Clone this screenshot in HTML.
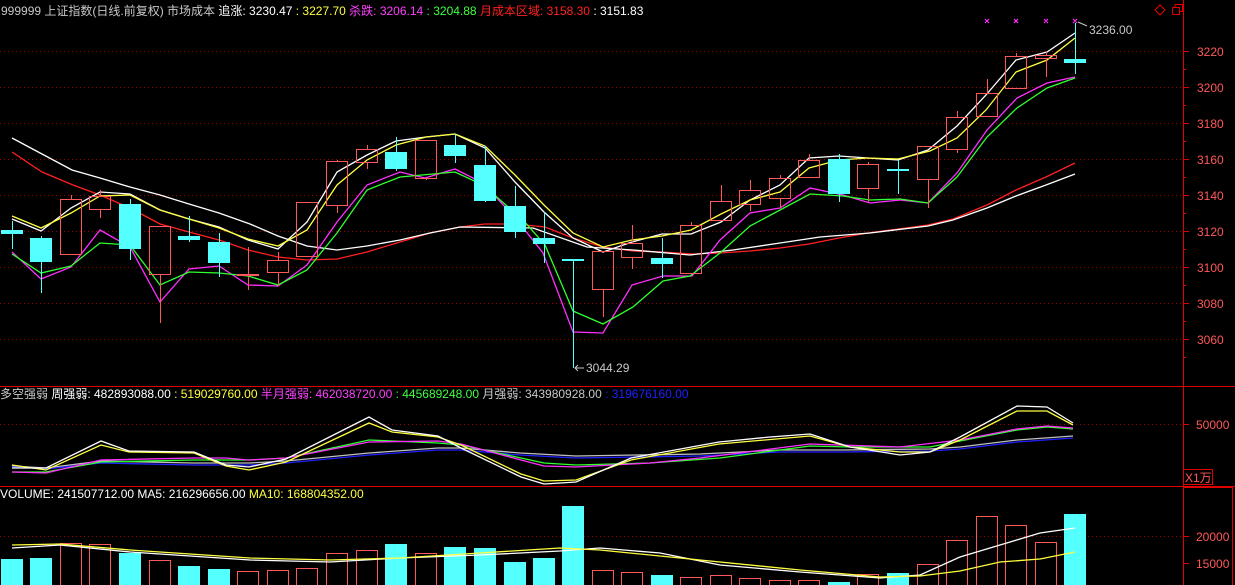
<!DOCTYPE html>
<html><head><meta charset="utf-8"><style>
html,body{margin:0;padding:0;background:#000;width:1235px;height:585px;overflow:hidden}
svg{display:block}
text{font-family:"Liberation Sans","Noto Sans CJK SC",sans-serif;font-size:12px}
</style></head><body>
<svg width="1235" height="585" viewBox="0 0 1235 585" xmlns="http://www.w3.org/2000/svg" shape-rendering="crispEdges">
<g stroke="#a00000" stroke-dasharray="1,3" stroke-width="1">
<line x1="0" y1="51.5" x2="1183" y2="51.5"/><line x1="0" y1="87.5" x2="1183" y2="87.5"/>
<line x1="0" y1="123.5" x2="1183" y2="123.5"/><line x1="0" y1="159.5" x2="1183" y2="159.5"/>
<line x1="0" y1="195.5" x2="1183" y2="195.5"/><line x1="0" y1="231.5" x2="1183" y2="231.5"/>
<line x1="0" y1="267.5" x2="1183" y2="267.5"/><line x1="0" y1="303.5" x2="1183" y2="303.5"/>
<line x1="0" y1="339.5" x2="1183" y2="339.5"/>
<line x1="0" y1="424.5" x2="1183" y2="424.5"/>
<line x1="0" y1="536.5" x2="1183" y2="536.5"/>
</g>
<g stroke="#e00000" stroke-width="1">
<line x1="1183.5" y1="0" x2="1183.5" y2="585"/>
<line x1="0" y1="386.5" x2="1235" y2="386.5"/>
<line x1="0" y1="486.5" x2="1235" y2="486.5"/>
<rect x="1183.5" y="487.5" width="49" height="100" fill="none"/>
<rect x="1183.5" y="469.5" width="29" height="15" fill="none"/>
<line x1="1183" y1="51.5" x2="1189" y2="51.5"/><line x1="1183" y1="87.5" x2="1189" y2="87.5"/>
<line x1="1183" y1="123.5" x2="1189" y2="123.5"/><line x1="1183" y1="159.5" x2="1189" y2="159.5"/>
<line x1="1183" y1="195.5" x2="1189" y2="195.5"/><line x1="1183" y1="231.5" x2="1189" y2="231.5"/>
<line x1="1183" y1="267.5" x2="1189" y2="267.5"/><line x1="1183" y1="303.5" x2="1189" y2="303.5"/>
<line x1="1183" y1="339.5" x2="1189" y2="339.5"/>
<line x1="1183" y1="69.5" x2="1186" y2="69.5"/><line x1="1183" y1="105.5" x2="1186" y2="105.5"/>
<line x1="1183" y1="141.5" x2="1186" y2="141.5"/><line x1="1183" y1="177.5" x2="1186" y2="177.5"/>
<line x1="1183" y1="213.5" x2="1186" y2="213.5"/><line x1="1183" y1="249.5" x2="1186" y2="249.5"/>
<line x1="1183" y1="285.5" x2="1186" y2="285.5"/><line x1="1183" y1="321.5" x2="1186" y2="321.5"/>
<line x1="1183" y1="357.5" x2="1186" y2="357.5"/>
<line x1="1183" y1="424.5" x2="1189" y2="424.5"/><line x1="1183" y1="536.5" x2="1189" y2="536.5"/><line x1="1183" y1="563.5" x2="1189" y2="563.5"/>
<path d="M1160 5 L1165 10 L1160 15 L1155 10 Z" fill="none"/>
<rect x="1172.5" y="7.5" width="7" height="7" fill="none"/>
<path d="M1175 7.5 V4.5 H1182.5 V11.5 H1179.5" fill="none"/>
</g>
<g fill="#ff5858">
<text x="1197" y="56">3220</text><text x="1197" y="92">3200</text><text x="1197" y="128">3180</text>
<text x="1197" y="164">3160</text><text x="1197" y="200">3140</text><text x="1197" y="236">3120</text>
<text x="1197" y="272">3100</text><text x="1197" y="308">3080</text><text x="1197" y="344">3060</text>
<text x="1196" y="429">50000</text><text x="1196" y="541">20000</text><text x="1196" y="568">15000</text>
<text x="1185" y="482" font-size="13">X1万</text>
</g>

<!-- header -->
<text x="1" y="15" fill="#c8c8c8" xml:space="preserve">999999 上证指数(日线.前复权) 市场成本 <tspan fill="#fff">追涨: 3230.47 </tspan><tspan fill="#ffff40">: 3227.70 </tspan><tspan fill="#ff40ff">杀跌: 3206.14 </tspan><tspan fill="#40ff40">: 3204.88 </tspan><tspan fill="#ff2020">月成本区域: 3158.30 </tspan><tspan fill="#fff">: 3151.83</tspan></text>
<text x="0" y="398" fill="#c8c8c8" xml:space="preserve">多空强弱 <tspan fill="#fff">周强弱: 482893088.00 </tspan><tspan fill="#ffff40">: 519029760.00 </tspan><tspan fill="#ff40ff">半月强弱: 462038720.00 </tspan><tspan fill="#40ff40">: 445689248.00 </tspan><tspan fill="#c8c8c8">月强弱: 343980928.00 </tspan><tspan fill="#2020ff">: 319676160.00</tspan></text>
<text x="0" y="498" fill="#fff" xml:space="preserve">VOLUME: 241507712.00 MA5: 216296656.00 <tspan fill="#ffff40">MA10: 168804352.00</tspan></text>

<!-- long MAs -->
<g fill="none" stroke-width="1.3" shape-rendering="auto">
<polyline stroke="#ff2020" points="12,152 42,172 73,185 100,195 130,208 160,224 189,232 219,240 248,250 278,257 307,260 337,259 367,252 400,242 430,233 460,227 485,224 515,224 545,227 573,238 603,247 633,251 663,252 693,254 720,253 750,251 780,248 809,244 839,238 868,233 898,229 928,225 953,219 987,205 1016,190 1046,177 1075,163"/>
<polyline stroke="#ffffff" points="12,138 42,154 72,170 100,178 130,187 160,195 189,204 219,213 250,224 278,236 307,246 337,250 367,246 400,240 430,233 460,227 533,228 587,247 633,250 690,255 733,250 780,243 820,237 870,233 928,226 953,220 987,208 1016,196 1046,185 1075,174"/>
<!-- short MAs -->
<polyline stroke="#ffffff" points="12,219 41,231 71,208 100,192 130,194 160,210 189,219 219,227 248,240 278,249 307,222 337,172 367,155 396,141 426,137 455,134 485,148 515,182 544,212 573,238 603,252 632,242 662,234 691,234 721,222 750,200 780,185 809,158 839,156 868,158 898,160 928,150 957,126 986,95 1016,60 1047,52 1075,33"/>
<polyline stroke="#ffff40" points="12,216 41,228 71,213 100,196 130,195 160,210 189,219 219,228 248,239 278,246 307,230 337,185 367,160 396,145 426,137 455,134 485,146 515,175 544,205 573,233 603,247 632,240 662,236 691,230 721,214 750,200 780,192 809,168 839,160 868,158 898,159 930,151 957,138 986,110 1016,72 1047,60 1075,38"/>
<polyline stroke="#ff30ff" points="12,252 41,279 71,267 100,230 130,247 160,302 189,269 219,266 248,285 278,286 307,265 337,222 367,185 400,172 425,178 455,169 483,183 517,220 543,253 573,332 603,333 632,285 663,276 692,276 720,240 750,213 780,208 810,188 843,195 870,203 900,200 928,203 957,173 987,130 1017,98 1047,83 1075,77"/>
<polyline stroke="#30ff30" points="12,254 41,273 71,266 100,243 130,245 160,285 189,272 219,273 248,276 278,285 307,270 337,233 367,190 400,177 455,172 483,185 523,220 545,245 573,311 603,324 633,307 663,281 690,276 720,253 750,226 780,210 810,194 843,196 870,200 900,199 928,203 957,177 987,137 1017,108 1047,88 1075,78"/>
</g>

<!-- candles -->
<g stroke="#ff5858" fill="none">
<path d="M71.5 195V199M100.5 190V196M100.5 210V218M160.5 226V226M160.5 275V323M248.5 247V290M278.5 252V260M278.5 273V286M307.5 202V202M337.5 160V161M337.5 206V213M367.5 145V149M367.5 163V169M426.5 179V180M603.5 290V317M632.5 225V243M632.5 258V269M691.5 222V225M721.5 185V201M750.5 180V190M750.5 205V211M780.5 175V178M780.5 199V208M809.5 154V160M868.5 162V164M868.5 189V202M928.5 180V208M957.5 111V117M957.5 150V153M987.5 79V93M1016.5 53V56M1046.5 52V55M1046.5 58V77"/>
<rect x="60.5" y="199.5" width="21" height="55"/>
<rect x="89.5" y="196.5" width="21" height="13"/>
<rect x="149.5" y="226.5" width="21" height="48"/>
<rect x="237.5" y="274.5" width="21" height="1"/>
<rect x="267.5" y="260.5" width="21" height="12"/>
<rect x="296.5" y="202.5" width="21" height="54"/>
<rect x="326.5" y="161.5" width="21" height="44"/>
<rect x="356.5" y="149.5" width="21" height="13"/>
<rect x="415.5" y="140.5" width="21" height="38"/>
<rect x="592.5" y="251.5" width="21" height="38"/>
<rect x="621.5" y="243.5" width="21" height="14"/>
<rect x="680.5" y="225.5" width="21" height="48"/>
<rect x="710.5" y="201.5" width="21" height="19"/>
<rect x="739.5" y="190.5" width="21" height="14"/>
<rect x="769.5" y="178.5" width="21" height="20"/>
<rect x="798.5" y="160.5" width="21" height="17"/>
<rect x="857.5" y="164.5" width="21" height="24"/>
<rect x="917.5" y="146.5" width="21" height="33"/>
<rect x="946.5" y="117.5" width="21" height="32"/>
<rect x="976.5" y="93.5" width="21" height="23"/>
<rect x="1005.5" y="56.5" width="21" height="32"/>
<rect x="1035.5" y="55.5" width="21" height="3"/>
</g>
<g stroke="#54ffff" fill="#54ffff">
<path d="M12.5 221V249M41.5 236V293M130.5 199V260M189.5 216V242M219.5 233V277M396.5 137V171M455.5 134V163M485.5 146V202M515.5 186V238M544.5 212V263M573.5 259V368M662.5 238V278M839.5 154V202M898.5 160V194M1075.5 23V74"/>
<rect x="1.5" y="230.5" width="21" height="3"/>
<rect x="30.5" y="238.5" width="21" height="23"/>
<rect x="119.5" y="204.5" width="21" height="44"/>
<rect x="178.5" y="236.5" width="21" height="3"/>
<rect x="208.5" y="242.5" width="21" height="20"/>
<rect x="385.5" y="152.5" width="21" height="16"/>
<rect x="444.5" y="145.5" width="21" height="10"/>
<rect x="474.5" y="165.5" width="21" height="35"/>
<rect x="504.5" y="206.5" width="21" height="25"/>
<rect x="533.5" y="238.5" width="21" height="5"/>
<rect x="562.5" y="259.5" width="21" height="1"/>
<rect x="651.5" y="258.5" width="21" height="5"/>
<rect x="828.5" y="159.5" width="21" height="34"/>
<rect x="887.5" y="169.5" width="21" height="1"/>
<rect x="1064.5" y="59.5" width="21" height="3"/>
</g>
<g stroke="#c8c8c8" fill="none" shape-rendering="auto">
<path d="M575 368H584M578 365L575 368L578 371"/>
<path d="M1078 22L1087 26"/>
</g>
<text x="586" y="372" fill="#c8c8c8">3044.29</text>
<text x="1089" y="34" fill="#c8c8c8">3236.00</text>
<g stroke="#ff30ff" stroke-width="1.2" shape-rendering="auto">
<path d="M985 19l4 4m0-4l-4 4M1014 19l4 4m0-4l-4 4M1044 19l4 4m0-4l-4 4M1073 19l4 4m0-4l-4 4"/>
</g>

<!-- indicator pane -->
<g fill="none" stroke-width="1.3" shape-rendering="auto">
<polyline stroke="#c0c0c0" points="12,466 46,468 101,461 194,463 249,463 286,461 369,453 438,448 461,448 520,453 576,456 700,454 780,450 840,450 930,449 960,447 1017,440 1073,436"/>
<polyline stroke="#2020ff" points="12,467 46,469 101,463 194,465 249,465 286,463 369,455 438,450 461,450 520,455 576,458 700,456 780,452 840,452 930,451 960,449 1017,442 1073,438"/>
<polyline stroke="#30ff30" points="12,472 46,472 101,462 194,460 249,460 286,458 369,440 438,443 461,445 521,458 544,463 576,465 650,463 720,458 810,446 850,447 930,447 960,441 1017,430 1047,427 1073,429"/>
<polyline stroke="#ff30ff" points="12,472 46,473 101,460 194,458 226,458 249,460 286,458 369,442 438,441 461,444 521,460 544,466 576,467 650,463 700,458 810,444 900,447 960,440 1017,429 1047,426 1073,428"/>
<polyline stroke="#ffff40" points="12,465 46,470 101,445 129,452 194,453 226,466 249,470 286,462 369,423 392,432 438,437 461,445 521,474 544,481 576,480 631,460 719,444 810,436 850,447 900,452 930,452 960,440 1017,411 1047,411 1073,425"/>
<polyline stroke="#ffffff" points="12,468 46,468 101,441 129,451 194,452 226,465 249,467 286,459 369,417 392,430 438,436 461,448 521,477 544,484 576,482 631,458 719,442 770,437 810,434 850,447 900,455 930,452 960,437 1017,406 1047,407 1073,423"/>
</g>

<!-- volume pane -->
<g stroke="#54ffff" fill="#54ffff">
<rect x="1.5" y="559.5" width="21" height="30"/><rect x="30.5" y="558.5" width="21" height="30"/>
<rect x="119.5" y="553.5" width="21" height="40"/><rect x="178.5" y="566.5" width="21" height="30"/>
<rect x="208.5" y="569.5" width="21" height="30"/><rect x="385.5" y="544.5" width="21" height="50"/>
<rect x="444.5" y="547.5" width="21" height="50"/><rect x="474.5" y="548.5" width="21" height="50"/>
<rect x="504.5" y="562.5" width="21" height="30"/><rect x="533.5" y="558.5" width="21" height="30"/>
<rect x="562.5" y="506.5" width="21" height="90"/><rect x="651.5" y="575.5" width="21" height="20"/>
<rect x="828.5" y="582.5" width="21" height="20"/><rect x="887.5" y="573.5" width="21" height="20"/>
<rect x="1064.5" y="514.5" width="21" height="80"/>
</g>
<g stroke="#ff5858" fill="none">
<rect x="60.5" y="543.5" width="21" height="60"/><rect x="89.5" y="544.5" width="21" height="60"/>
<rect x="149.5" y="560.5" width="21" height="40"/><rect x="237.5" y="571.5" width="21" height="30"/>
<rect x="267.5" y="570.5" width="21" height="30"/><rect x="296.5" y="568.5" width="21" height="30"/>
<rect x="326.5" y="553.5" width="21" height="40"/><rect x="356.5" y="550.5" width="21" height="40"/>
<rect x="415.5" y="553.5" width="21" height="40"/><rect x="592.5" y="570.5" width="21" height="30"/>
<rect x="621.5" y="572.5" width="21" height="30"/><rect x="680.5" y="577.5" width="21" height="30"/>
<rect x="710.5" y="575.5" width="21" height="30"/><rect x="739.5" y="578.5" width="21" height="30"/>
<rect x="769.5" y="580.5" width="21" height="30"/><rect x="798.5" y="580.5" width="21" height="30"/>
<rect x="857.5" y="574.5" width="21" height="30"/><rect x="917.5" y="564.5" width="21" height="40"/>
<rect x="946.5" y="540.5" width="21" height="60"/><rect x="976.5" y="516.5" width="21" height="80"/>
<rect x="1005.5" y="525.5" width="21" height="80"/><rect x="1035.5" y="542.5" width="21" height="60"/>
</g>
<g fill="none" stroke-width="1.3" shape-rendering="auto">
<polyline stroke="#ffffff" points="12,548 60,545 130,552 250,560 330,562 400,558 480,555 560,551 600,548 660,553 720,565 800,572 880,578 920,575 960,557 1000,545 1040,533 1075,528"/>
<polyline stroke="#ffff40" points="12,545 60,544 130,550 250,558 330,560 400,558 480,553 560,548 600,550 700,560 800,570 880,577 920,576 960,571 1000,562 1040,559 1075,552"/>
</g>
</svg>
</body></html>
